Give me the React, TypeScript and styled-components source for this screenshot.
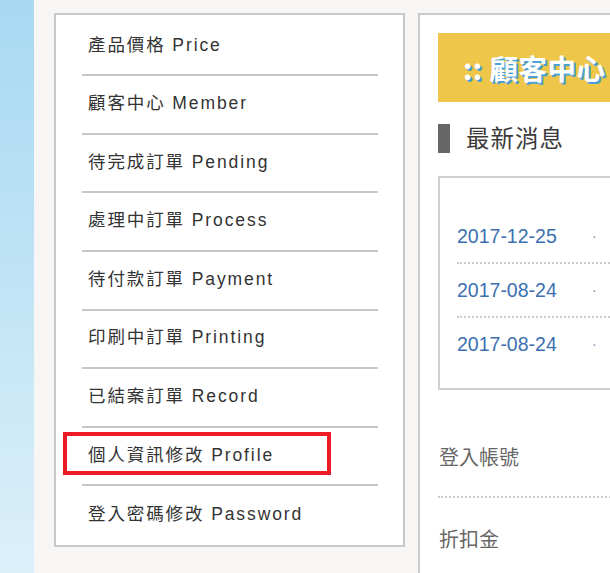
import React from "react";
import styled, { createGlobalStyle } from "styled-components";

const GlobalStyle = createGlobalStyle`
  html, body {
    margin: 0;
    padding: 0;
    background: #f7f6f4;
    overflow: hidden;
  }
  body {
    font-family: "Liberation Sans", "Noto Sans CJK TC", sans-serif;
  }
`;

const Page = styled.div`
  position: relative;
  display: flex;
  width: 610px;
  height: 573px;
  overflow: hidden;
  background: #f7f6f4;
`;

const Strip = styled.div`
  flex: 0 0 34px;
  background: linear-gradient(180deg, #a7d9f1 0%, #c4e5f6 55%, #dcf0fa 100%);
`;

const Content = styled.div`
  flex: 1;
  display: flex;
  align-items: flex-start;
  gap: 13px;
  padding: 13px 0 0 20px;
  min-width: 0;
`;

const Sidebar = styled.nav`
  flex: 0 0 351px;
  box-sizing: border-box;
  border: 2px solid #c8c8c8;
  background: #fff;
  padding: 2.8px 25px 0 26px;
`;

const MenuItem = styled.a<{ $last?: boolean }>`
  display: flex;
  align-items: center;
  box-sizing: border-box;
  height: 58.57px;
  padding: 0 0 6px 6px;
  border-bottom: ${(p) => (p.$last ? "none" : "2px solid #c6c6c6")};
  font-family: "Liberation Sans", "Noto Sans CJK TC", sans-serif;
  font-size: 17.5px;
  letter-spacing: 1.9px;
  color: #333;
  text-decoration: none;
  white-space: nowrap;
`;

const Main = styled.main`
  flex: 0 0 520px;
  box-sizing: border-box;
  border: 2px solid #cbcbcb;
  border-right: none;
  background: #fff;
  padding: 18px 0 0 18px;
  min-height: 600px;
`;

const Banner = styled.div`
  height: 69px;
  background: #edc64a;
  display: flex;
  align-items: center;
  padding-left: 25px;
`;

const BannerTitle = styled.h1`
  margin: 0;
  font-family: "Noto Sans CJK TC", sans-serif;
  font-weight: 700;
  font-size: 28.5px;
  color: #fff;
  letter-spacing: 0.5px;
  text-shadow: 2px 2px 0 #4a9fd6;
  white-space: nowrap;
`;

const SectionHead = styled.div`
  display: flex;
  align-items: center;
  gap: 16px;
  margin-top: 22px;
  height: 29px;
`;

const HeadBar = styled.span`
  width: 12px;
  height: 29px;
  background: #666;
`;

const HeadText = styled.h2`
  margin: 0 0 3px;
  font-family: "Noto Sans CJK TC", serif;
  font-weight: 400;
  font-size: 23.5px;
  color: #3a3a3a;
  letter-spacing: 1px;
`;

const NewsBox = styled.div`
  margin-top: 23px;
  border: 2px solid #cfcfcf;
  border-right: none;
  padding: 32px 0 18px 17px;
`;

const NewsRow = styled.div<{ $first?: boolean }>`
  display: flex;
  align-items: center;
  height: 52px;
  border-top: ${(p) => (p.$first ? "none" : "2px dotted #cccccc")};
`;

const NewsDate = styled.span`
  font-family: "Liberation Sans", sans-serif;
  font-size: 19.5px;
  color: #3c6fb1;
  width: 135px;
`;

const NewsDot = styled.span`
  font-family: "Liberation Sans", sans-serif;
  font-size: 14px;
  color: #8c86b4;
`;

const InfoList = styled.div`
  margin-top: 26px;
`;

const InfoRow = styled.div<{ $first?: boolean }>`
  display: flex;
  align-items: center;
  height: 80px;
  padding-left: 1px;
  border-top: ${(p) => (p.$first ? "none" : "2px dotted #cccccc")};
  font-family: "Noto Sans CJK TC", sans-serif;
  font-size: 20px;
  color: #666;
`;

const Highlight = styled.div`
  position: absolute;
  left: 63px;
  top: 432px;
  width: 268px;
  height: 43px;
  box-sizing: border-box;
  border: 4px solid #ed1c24;
  pointer-events: none;
`;

const menu = [
  "產品價格 Price",
  "顧客中心 Member",
  "待完成訂單 Pending",
  "處理中訂單 Process",
  "待付款訂單 Payment",
  "印刷中訂單 Printing",
  "已結案訂單 Record",
  "個人資訊修改 Profile",
  "登入密碼修改 Password",
];

const news = ["2017-12-25", "2017-08-24", "2017-08-24"];

export default function App() {
  return (
    <>
      <GlobalStyle />
      <Page>
        <Strip />
        <Content>
          <Sidebar>
            {menu.map((m, i) => (
              <MenuItem key={m} href="#" $last={i === menu.length - 1}>
                {m}
              </MenuItem>
            ))}
          </Sidebar>
          <Main>
            <Banner>
              <BannerTitle>:: 顧客中心</BannerTitle>
            </Banner>
            <SectionHead>
              <HeadBar />
              <HeadText>最新消息</HeadText>
            </SectionHead>
            <NewsBox>
              {news.map((d, i) => (
                <NewsRow key={i} $first={i === 0}>
                  <NewsDate>{d}</NewsDate>
                  <NewsDot>·</NewsDot>
                </NewsRow>
              ))}
            </NewsBox>
            <InfoList>
              <InfoRow $first>登入帳號</InfoRow>
              <InfoRow>折扣金</InfoRow>
            </InfoList>
          </Main>
        </Content>
        <Highlight />
      </Page>
    </>
  );
}
